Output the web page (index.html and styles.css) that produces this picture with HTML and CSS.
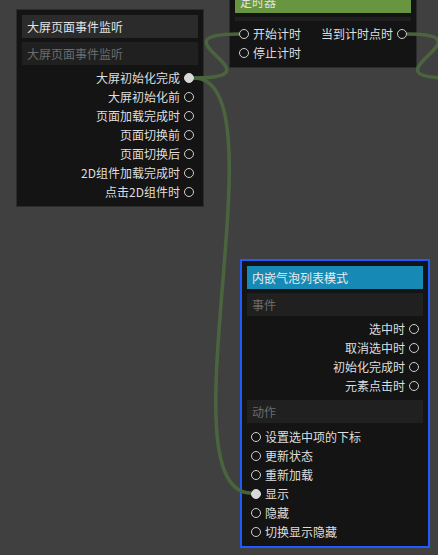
FILE: index.html
```html
<!DOCTYPE html>
<html lang="zh-CN">
<head>
  <meta charset="UTF-8" />
  <title>事件编排</title>
  <link rel="stylesheet" href="styles.css">
</head>
<body>
  <div class="canvas">

    <!-- 大屏页面事件监听 -->
    <div class="node node-page">
      <div class="node-title">大屏页面事件监听</div>
      <div class="node-sub">大屏页面事件监听</div>
      <div class="ports">
        <div class="port out"><span>大屏初始化完成</span><i class="dot on"></i></div>
        <div class="port out"><span>大屏初始化前</span><i class="dot"></i></div>
        <div class="port out"><span>页面加载完成时</span><i class="dot"></i></div>
        <div class="port out"><span>页面切换前</span><i class="dot"></i></div>
        <div class="port out"><span>页面切换后</span><i class="dot"></i></div>
        <div class="port out"><span>2D组件加载完成时</span><i class="dot"></i></div>
        <div class="port out"><span>点击2D组件时</span><i class="dot"></i></div>
      </div>
    </div>

    <!-- 定时器 -->
    <div class="node node-timer">
      <div class="node-title green">定时器</div>
      <div class="node-sub thin"></div>
      <div class="ports split">
        <div class="col">
          <div class="port in"><i class="dot"></i><span>开始计时</span></div>
          <div class="port in"><i class="dot"></i><span>停止计时</span></div>
        </div>
        <div class="col">
          <div class="port out"><span>当到计时点时</span><i class="dot"></i></div>
        </div>
      </div>
    </div>

    <!-- 内嵌气泡列表模式 -->
    <div class="node node-bubble selected">
      <div class="node-title blue">内嵌气泡列表模式</div>
      <div class="node-sub">事件</div>
      <div class="ports">
        <div class="port out"><span>选中时</span><i class="dot"></i></div>
        <div class="port out"><span>取消选中时</span><i class="dot"></i></div>
        <div class="port out"><span>初始化完成时</span><i class="dot"></i></div>
        <div class="port out"><span>元素点击时</span><i class="dot"></i></div>
      </div>
      <div class="node-sub gap">动作</div>
      <div class="ports more">
        <div class="port in"><i class="dot"></i><span>设置选中项的下标</span></div>
        <div class="port in"><i class="dot"></i><span>更新状态</span></div>
        <div class="port in"><i class="dot"></i><span>重新加载</span></div>
        <div class="port in"><i class="dot on"></i><span>显示</span></div>
        <div class="port in"><i class="dot"></i><span>隐藏</span></div>
        <div class="port in"><i class="dot"></i><span>切换显示隐藏</span></div>
      </div>
    </div>

    <svg class="links" width="438" height="555" viewBox="0 0 438 555">
      <path d="M194,78 C285,78 160,493 251,493" />
      <path d="M194,78 C285,78 148,34 239,34" />
      <path d="M407,34 C495,34 360,78 450,78" />
    </svg>
  </div>
</body>
</html>
```

FILE: styles.css
```css
body {
  margin: 0;
  background-color: #404040;
  font-family: "Noto Sans CJK SC", "Noto Sans", sans-serif;
  font-size: 12px;
  overflow: hidden;
}

.canvas {
  position: relative;
  width: 438px;
  height: 555px;
}

.node {
  position: absolute;
  width: 176px;
  padding: 5px;
  background-color: #141414;
  border: 1px solid #2c2c2c;
}

.node.selected {
  border: 2px solid #1f5cff;
}

.node-page {
  left: 16px;
  top: 9px;
}

.node-timer {
  left: 229px;
  top: -16px;
}

.node-bubble {
  left: 240px;
  top: 259px;
}

.node-title {
  height: 23px;
  line-height: 23px;
  padding: 0 5px;
  background-color: #2b2b2b;
  color: #e2e2e2;
}

.node-title.green {
  background-color: #68953f;
}

.node-title.blue {
  background-color: #1689b4;
  color: #ececec;
}

.node-sub {
  margin-top: 4px;
  height: 23px;
  line-height: 23px;
  padding: 0 5px;
  background-color: #202020;
  color: #6c6c6c;
}

.node-sub.thin {
  height: 4px;
}

.node-sub.gap {
  margin-top: 5px;
}

.ports {
  padding-top: 3px;
}

.ports.more {
  padding-top: 4px;
}

.ports.split {
  display: flex;
  justify-content: space-between;
}

.port {
  height: 19px;
  display: flex;
  align-items: center;
  gap: 4px;
  color: #dedede;
  white-space: nowrap;
}

.port.out {
  justify-content: flex-end;
  padding-right: 4px;
}

.port.in {
  padding-left: 4px;
}

.dot {
  width: 10px;
  height: 10px;
  box-sizing: border-box;
  border: 1.5px solid #cfcfcf;
  border-radius: 50%;
  flex-shrink: 0;
}

.dot.on {
  background-color: #d9d9d9;
  border-color: #d9d9d9;
}

.links {
  position: absolute;
  left: 0;
  top: 0;
  pointer-events: none;
}

.links path {
  fill: none;
  stroke: #4b673e;
  stroke-width: 3.5;
  opacity: 0.95;
}
```
